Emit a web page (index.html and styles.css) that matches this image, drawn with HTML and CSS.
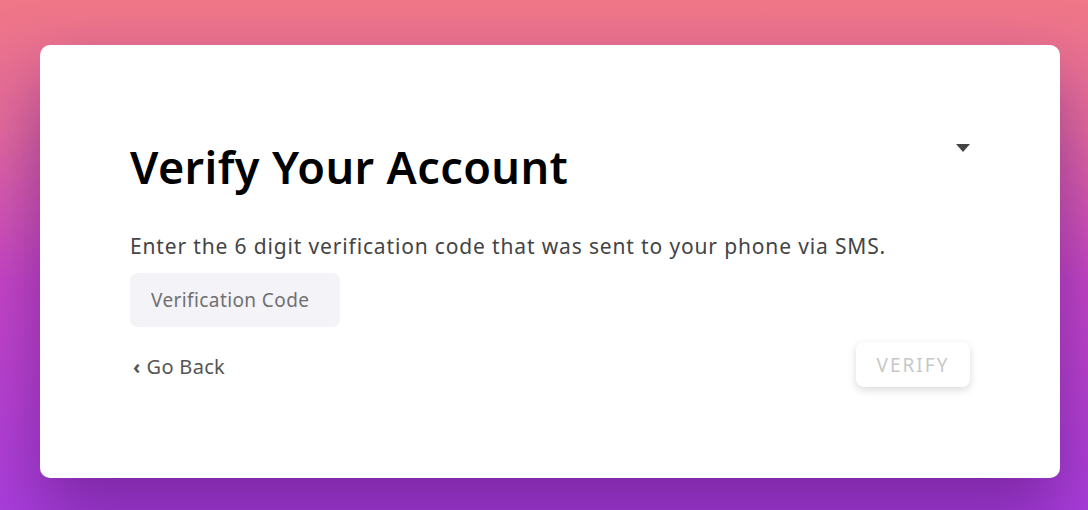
FILE: index.html
```html
<!DOCTYPE html>
<html lang="en">

<head>
    <meta charset="UTF-8">
    <meta name="viewport" content="width=device-width, initial-scale=1.0">
    <title>Verify Your Account</title>
    <link rel="stylesheet" href="styles.css">
</head>

<body>
    <div class="card">
        <div class="card-top">
            <h1>Verify Your Account</h1>
            <span class="caret"></span>
        </div>
        <p class="hint">Enter the 6 digit verification code that was sent to your phone via SMS.</p>
        <input type="text" class="code-input" placeholder="Verification Code">
        <div class="actions">
            <a href="#" class="back"><span class="chev">&lsaquo;</span>Go Back</a>
            <button type="button" class="verify" disabled>VERIFY</button>
        </div>
    </div>
</body>

</html>
```

FILE: styles.css
```css
html, body {
    height: 100%;
}

body {
    font-family: "Noto Sans", Arial, sans-serif;
    margin: 0;
    padding: 45px 28px 0 40px;
    box-sizing: border-box;
    background: linear-gradient(to bottom, #f07787 0%, #e66c9c 25%, #c646c6 55%, #aa3edc 100%);
    overflow: hidden;
}

.card {
    background-color: #fff;
    border-radius: 10px;
    height: 433px;
    box-sizing: border-box;
    padding: 82px 90px 0 90px;
    box-shadow: 0 36px 70px rgba(80, 20, 120, 0.55);
}

.card-top {
    display: flex;
    justify-content: space-between;
    align-items: flex-start;
}

h1 {
    margin: 0;
    font-size: 45px;
    font-weight: 600;
    letter-spacing: 0.4px;
    color: #000;
    line-height: 80px;
}

.caret {
    width: 0;
    height: 0;
    margin-top: 17px;
    border-left: 7px solid transparent;
    border-right: 7px solid transparent;
    border-top: 8px solid #444;
}

.hint {
    margin: 25px 0 13px;
    font-size: 21px;
    letter-spacing: 0.85px;
    color: #444;
    line-height: 28px;
}

.code-input {
    width: 210px;
    height: 54px;
    box-sizing: border-box;
    padding: 0 21px;
    border: none;
    border-radius: 8px;
    background-color: #f4f3f8;
    font-family: inherit;
    font-size: 19px;
    letter-spacing: 0.4px;
    color: #333;
    outline: none;
}

.code-input::placeholder {
    color: #707070;
}

.actions {
    display: flex;
    justify-content: space-between;
    align-items: flex-start;
    margin-top: 15px;
}

.back {
    margin-top: 11px;
    font-size: 20px;
    letter-spacing: 0.3px;
    color: #555;
    text-decoration: none;
}

.chev {
    margin: 0 6px 0 3px;
    font-weight: 700;
}

.verify {
    width: 114px;
    height: 45px;
    border: none;
    border-radius: 8px;
    background-color: #fff;
    box-shadow: 0 3px 8px rgba(0, 0, 0, 0.15);
    font-family: inherit;
    font-size: 19px;
    letter-spacing: 2px;
    color: #c8c8c8;
}
```
